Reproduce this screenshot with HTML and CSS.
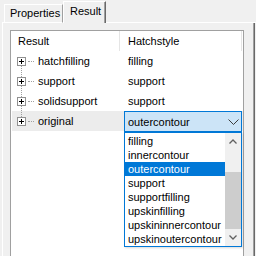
FILE: index.html
```html
<!DOCTYPE html>
<html lang="en">
<head>
    <meta charset="UTF-8">
    <title>Result</title>
    <link rel="stylesheet" href="styles.css">
</head>
<body>

    <div class="tab-strip">
        <div class="tab-edge"></div>
        <div class="tab">Properties</div>
        <div class="tab active">Result</div>
        <div class="tab-fill"></div>
    </div>

    <div class="tab-page">
        <div class="tree-list">
            <div class="tree-header">
                <div class="col-head first">Result</div>
                <div class="col-head">Hatchstyle</div>
            </div>

            <div class="tree-row has-next">
                <div class="node">
                    <svg class="expander" width="9" height="9"><rect x=".5" y=".5" width="8" height="8" fill="#fff" stroke="#919191"/><path d="M2 4.5h5M4.5 2v5" stroke="#000"/></svg>
                    <span class="hline"></span>
                    <span class="label">hatchfilling</span>
                </div>
                <div class="value">filling</div>
            </div>

            <div class="tree-row has-next">
                <div class="node">
                    <svg class="expander" width="9" height="9"><rect x=".5" y=".5" width="8" height="8" fill="#fff" stroke="#919191"/><path d="M2 4.5h5M4.5 2v5" stroke="#000"/></svg>
                    <span class="hline"></span>
                    <span class="label">support</span>
                </div>
                <div class="value">support</div>
            </div>

            <div class="tree-row has-next">
                <div class="node">
                    <svg class="expander" width="9" height="9"><rect x=".5" y=".5" width="8" height="8" fill="#fff" stroke="#919191"/><path d="M2 4.5h5M4.5 2v5" stroke="#000"/></svg>
                    <span class="hline"></span>
                    <span class="label">solidsupport</span>
                </div>
                <div class="value">support</div>
            </div>

            <div class="tree-row selected">
                <div class="node">
                    <svg class="expander" width="9" height="9"><rect x=".5" y=".5" width="8" height="8" fill="#fff" stroke="#919191"/><path d="M2 4.5h5M4.5 2v5" stroke="#000"/></svg>
                    <span class="hline"></span>
                    <span class="label">original</span>
                </div>
                <div class="value editing">
                    <div class="combo">
                        <span>outercontour</span>
                        <svg width="11" height="6"><path d="M.5 .5l5 5 5-5" fill="none" stroke="#3c3c3c"/></svg>
                    </div>

                    <!-- open drop-down of the hatchstyle combo -->
                    <div class="dropdown">
                        <div class="options">
                            <div class="option">filling</div>
                            <div class="option">innercontour</div>
                            <div class="option current">outercontour</div>
                            <div class="option">support</div>
                            <div class="option">supportfilling</div>
                            <div class="option">upskinfilling</div>
                            <div class="option">upskininnercontour</div>
                            <div class="option">upskinoutercontour</div>
                        </div>
                        <div class="scrollbar">
                            <div class="scroll-btn">
                                <svg width="8" height="5"><path d="M.5 4.5l3.5-3.5 3.5 3.5" fill="none" stroke="#606060" stroke-width="1.3"/></svg>
                            </div>
                            <div class="scroll-track"></div>
                            <div class="scroll-thumb"></div>
                            <div class="scroll-btn">
                                <svg width="8" height="5"><path d="M.5 .5l3.5 3.5 3.5-3.5" fill="none" stroke="#606060" stroke-width="1.3"/></svg>
                            </div>
                        </div>
                    </div>
                </div>
            </div>
        </div>
    </div>

</body>
</html>
```

FILE: styles.css
```css
* {
    margin: 0;
    padding: 0;
    box-sizing: border-box;
}

body {
    width: 256px;
    height: 256px;
    overflow: hidden;
    background-color: #f0f0f0;
    font-family: "Liberation Sans", Arial, sans-serif;
    font-size: 11px;
    color: #000;
}

/* tab strip */
.tab-strip {
    display: flex;
    align-items: flex-end;
    height: 23px;
    margin-left: 2px;
}

.tab-edge {
    width: 2px;
    height: 1px;
    background-color: #fff;
}

.tab {
    width: 59px;
    height: 19px;
    padding-left: 5px;
    line-height: 17px;
    border-left: 1px solid #fff;
    border-top: 1px solid #fff;
    border-right: 1px solid #a0a0a0;
    border-bottom: 1px solid #fff;
}

.tab.active {
    width: 43px;
    height: 22px;
    padding-left: 6px;
    line-height: 19px;
    border-bottom: none;
    border-right-color: #696969;
    box-shadow: inset -1px 0 #a0a0a0;
}

.tab-fill {
    flex-grow: 1;
    height: 1px;
    background-color: #fff;
}

/* tab page */
.tab-page {
    width: 253px;
    height: 233px;
    margin-left: 2px;
    padding: 7px 0 0 7px;
    border-left: 1px solid #fff;
    border-right: 1px solid #696969;
    box-shadow: inset -1px 0 #a0a0a0;
}

.tree-list {
    width: 234px;
    height: 226px;
    background-color: #fff;
    border: 1px solid #a0a0a0;
    border-bottom: none;
}

.tree-header {
    display: grid;
    grid-template-columns: 109px 122px;
    height: 20px;
    line-height: 20px;
}

.col-head {
    padding-left: 8px;
    border-right: 1px solid #e5e5e5;
}

.col-head.first {
    padding-left: 7px;
}

.tree-row {
    display: grid;
    grid-template-columns: 109px 122px;
    height: 20px;
    line-height: 20px;
}

.tree-row.selected {
    background-color: #ececec;
    margin-left: 1px;
    grid-template-columns: 108px 122px;
}

.node {
    display: flex;
    align-items: center;
    height: 20px;
    padding-left: 6px;
    position: relative;
}

.selected .node {
    padding-left: 5px;
}

.expander {
    display: block;
    flex-shrink: 0;
}

.hline {
    width: 6px;
    margin: 0 4px 0 2px;
    border-top: 1px dotted #a0a0a0;
}

/* dotted connector down to the next sibling */
.has-next .node::after {
    content: "";
    position: absolute;
    left: 10px;
    top: 15px;
    height: 11px;
    border-left: 1px dotted #a0a0a0;
}

.value {
    padding-left: 8px;
}

.value.editing {
    padding-left: 4px;
    position: relative;
}

.combo {
    display: flex;
    align-items: center;
    justify-content: space-between;
    width: 118px;
    height: 21px;
    padding: 0 2px 0 3px;
    background-color: #cce4f7;
    border: 1px solid #0078d7;
}

.combo svg {
    display: block;
}

/* drop-down list */
.dropdown {
    position: absolute;
    top: 21px;
    left: 4px;
    width: 118px;
    height: 115px;
    display: flex;
    background-color: #fff;
    border: 1px solid #0078d7;
    box-shadow: 1px 1px 2px rgba(0, 0, 0, 0.15);
}

.options {
    flex-grow: 1;
    padding-top: 1px;
}

.option {
    height: 14px;
    line-height: 14px;
    padding-left: 3px;
}

.option.current {
    background-color: #0078d7;
    color: #fff;
}

.scrollbar {
    width: 16px;
    display: flex;
    flex-direction: column;
    background-color: #f0f0f0;
}

.scroll-btn {
    height: 17px;
    display: flex;
    align-items: center;
    justify-content: center;
}

.scroll-track {
    height: 22px;
}

.scroll-thumb {
    height: 57px;
    background-color: #cdcdcd;
}
```
